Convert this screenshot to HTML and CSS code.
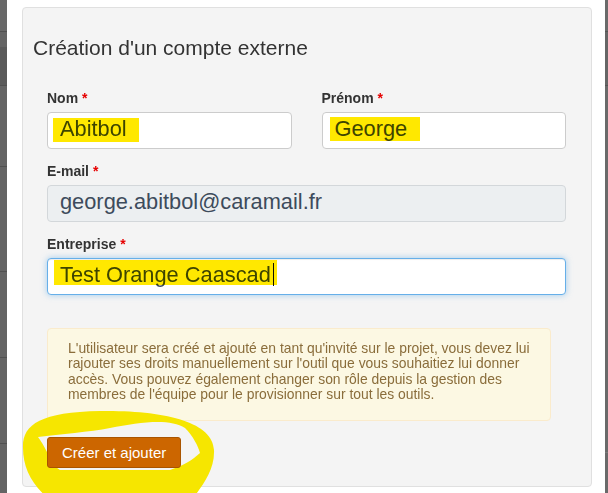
FILE: index.html
```html
<!DOCTYPE html>
<html lang="fr">
<head>
<meta charset="utf-8">
<title>Création d'un compte externe</title>
<link rel="stylesheet" href="styles.css">
</head>
<body>
  <div class="strip strip-left"></div>
  <div class="modal">
    <section class="panel">
      <h3 class="title">Création d'un compte externe</h3>
      <form class="form">
        <div class="row">
          <div class="group">
            <label class="label">Nom <span class="req">*</span></label>
            <div class="input">Abitbol<span class="marker marker-nom"></span></div>
          </div>
          <div class="group">
            <label class="label">Prénom <span class="req">*</span></label>
            <div class="input">George<span class="marker marker-prenom"></span></div>
          </div>
        </div>
        <div class="group">
          <label class="label">E-mail <span class="req">*</span></label>
          <div class="input disabled">george.abitbol@caramail.fr</div>
        </div>
        <div class="group group-last">
          <label class="label">Entreprise <span class="req">*</span></label>
          <div class="input focus">Test Orange Caascad<span class="caret"></span><span class="marker marker-ent"></span></div>
        </div>
        <div class="alert">L'utilisateur sera créé et ajouté en tant qu'invité sur le projet, vous devez lui rajouter ses droits manuellement sur l'outil que vous souhaitiez lui donner accès. Vous pouvez également changer son rôle depuis la gestion des membres de l'équipe pour le provisionner sur tout les outils.</div>
        <button type="button" class="btn">Créer et ajouter</button>
      </form>
    </section>
  </div>
  <div class="strip strip-right"></div>
  <svg class="loop" viewBox="0 0 608 493" width="608" height="493" aria-hidden="true">
    <path fill="#f6e600" fill-rule="evenodd" d="M23,448 C22,425 40,412 100,411 C165,410 213,422 214,450 C215,472 200,488 192,500 L50,500 C32,485 23,468 23,448 Z M38,437 C60,434 90,432 110,428 C140,422 170,418 185,428 C193,436 198,446 200,453 C192,460 185,465 170,470 L60,470 C52,465 48,458 47,452 C44,446 41,441 38,437 Z"/>
  </svg>
</body>
</html>
```
FILE: styles.css
```css
html, body {
  margin: 0;
  padding: 0;
}

body {
  position: relative;
  height: 493px;
  display: flex;
  overflow: hidden;
  background: #fff;
  font-family: "Liberation Sans", Arial, sans-serif;
  color: #333;
}

.strip {
  flex: none;
}

.strip-left {
  width: 7px;
  background: linear-gradient(to bottom,
    #686868 0 31px, #505050 31px 32px,
    #646464 32px 47px, #5a5a5a 47px 85px, #505050 85px 86px,
    #646464 86px 166px, #505050 166px 167px,
    #646464 167px 271px, #505050 271px 272px,
    #646464 272px 357px, #505050 357px 358px,
    #646464 358px 443px, #505050 443px 444px,
    #646464 444px);
}

.strip-right {
  width: 3px;
  background: linear-gradient(to bottom,
    #6a6a6a 0 31px, #555 31px 32px,
    #666 32px 85px, #555 85px 86px,
    #6a6a6a 86px 452px, #7a7a7a 452px 453px,
    #6a6a6a 453px);
}

.modal {
  flex: 1;
  padding: 7px 13px 7px 15px;
}

.panel {
  background: #f4f4f4;
  border: 1px solid #e0e0e0;
  border-radius: 4px;
  padding: 28px 25px 18px 0;
}

.title {
  margin: 0 0 29px 10px;
  font-size: 21px;
  font-weight: normal;
  line-height: 23px;
  color: #333;
}

.form {
  margin: 0 0 0 24px;
}

.row {
  display: grid;
  grid-template-columns: 1fr 1fr;
  column-gap: 30px;
}

.group {
  margin-bottom: 12px;
}

.group-last {
  margin-bottom: 0;
}

.label {
  display: block;
  font-size: 14px;
  font-weight: bold;
  line-height: 20px;
  margin-bottom: 4px;
  color: #333;
}

.req {
  color: #e60000;
}

.input {
  position: relative;
  box-sizing: border-box;
  height: 37px;
  border: 1px solid #ccc;
  border-radius: 4px;
  background: #fff;
  padding: 0 12px 5px;
  display: flex;
  align-items: center;
  font-size: 21.8px;
  line-height: 25px;
  color: #3d4b5c;
  white-space: nowrap;
}

.input.disabled {
  background: #eceff1;
  border-color: #d3d7da;
}

.input.focus {
  border-color: #66afe9;
  box-shadow: inset 0 1px 1px rgba(0, 0, 0, .075), 0 0 6px rgba(102, 175, 233, .6);
}

.caret {
  display: inline-block;
  width: 1px;
  height: 23px;
  margin-left: 2px;
  background: #111;
}

.marker {
  position: absolute;
  background: #ffe800;
  mix-blend-mode: multiply;
}

.marker-nom {
  left: 5px;
  top: 5px;
  width: 86px;
  height: 24px;
}

.marker-prenom {
  left: 7px;
  top: 4px;
  width: 90px;
  height: 24px;
}

.marker-ent {
  left: 6px;
  top: 1px;
  width: 223px;
  height: 25px;
}

.alert {
  width: 504px;
  box-sizing: border-box;
  margin: 33px 0 16px;
  padding: 12px 14px 17px 20px;
  background: #fcf8e3;
  border: 1px solid #faebcc;
  border-radius: 4px;
  color: #8a6d3b;
  font-size: 13.9px;
  line-height: 15.4px;
}

.btn {
  position: relative;
  z-index: 2;
  display: block;
  margin: 0;
  background: #cc6600;
  border: 1px solid #a95400;
  border-radius: 3px;
  color: #fff;
  font-family: "Liberation Sans", Arial, sans-serif;
  font-size: 15px;
  line-height: 17px;
  padding: 6px 14px;
}

.loop {
  position: absolute;
  left: 0;
  top: 0;
  z-index: 1;
  pointer-events: none;
}
```
